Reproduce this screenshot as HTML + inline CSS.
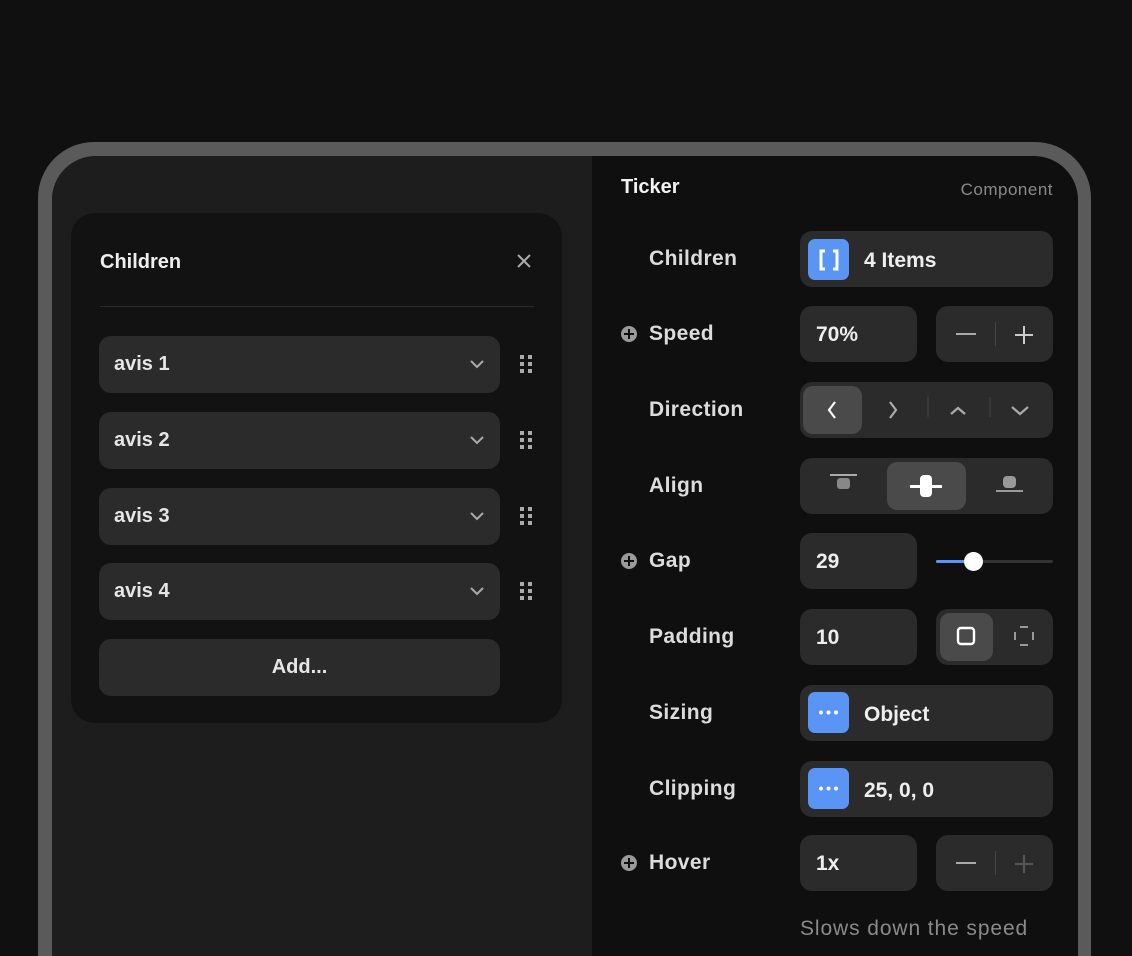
<!DOCTYPE html>
<html><head><meta charset="utf-8"><style>
*{margin:0;padding:0;box-sizing:border-box}
html,body{width:1132px;height:956px;overflow:hidden}
body{background:#101010;position:relative;font-family:"Liberation Sans",sans-serif;color:#e6e6e6}
.a{position:absolute}
.frame{left:38px;top:142px;width:1053px;height:814px;background:#5a5a5a;border-radius:56px 56px 0 0}
.inner{left:52px;top:156px;width:1026px;height:800px;background:#0f0f0f;border-radius:44px 44px 0 0;overflow:hidden}
.leftp{left:0;top:0;width:540px;height:800px;background:#1d1d1d}
.pop{left:71px;top:213px;width:491px;height:510px;background:#121212;border-radius:24px}
.row{left:99px;width:401px;height:57px;background:#2b2b2b;border-radius:12px;font-weight:bold;font-size:20px;line-height:57px;padding-left:15px}
.lbl{left:649px;font-size:21px;font-weight:bold;color:#dcdcdc;letter-spacing:0.4px;line-height:24px}
.box{background:#2b2b2b;border-radius:12px}
.val{font-size:21px;font-weight:bold;color:#eee}
.blue{width:41px;height:41px;background:#5a95f5;border-radius:7px}
.plus{left:621px;width:16px;height:16px;border-radius:50%;background:#9a9a9a}
.plus:before{content:"";position:absolute;left:3px;top:7px;width:10px;height:2px;background:#0f0f0f}
.plus:after{content:"";position:absolute;left:7px;top:3px;width:2px;height:10px;background:#0f0f0f}
</style></head><body>
<div class="a frame"></div>
<div class="a inner"><div class="a leftp"></div></div>

<div class="a pop"></div>
<div class="a" style="left:100px;top:251px;font-size:20px;font-weight:bold;color:#eee">Children</div>
<svg class="a" style="left:516px;top:253px" width="16" height="16"><path d="M2 2L14 14M14 2L2 14" stroke="#aaa" stroke-width="2"/></svg>
<div class="a" style="left:100px;top:306px;width:434px;height:1px;background:#2c2c2c"></div>

<div class="a row" style="top:336px">avis 1</div>
<div class="a row" style="top:412px">avis 2</div>
<div class="a row" style="top:488px">avis 3</div>
<div class="a row" style="top:563px">avis 4</div>
<div class="a row" style="top:639px;padding-left:0;text-align:center">Add...</div>
<svg class="a" style="left:468px;top:356px" width="20" height="260">
<g fill="none" stroke="#aaa" stroke-width="2"><path d="M3 5l6 6 6-6"/><path d="M3 81l6 6 6-6"/><path d="M3 157l6 6 6-6"/><path d="M3 232l6 6 6-6"/></g></svg>
<svg class="a" style="left:519px;top:354px" width="16" height="250" fill="#aaa">
<g><rect x="1" y="1" width="4" height="4"/><rect x="9" y="1" width="4" height="4"/><rect x="1" y="8" width="4" height="4"/><rect x="9" y="8" width="4" height="4"/><rect x="1" y="15" width="4" height="4"/><rect x="9" y="15" width="4" height="4"/></g>
<g transform="translate(0,76)"><rect x="1" y="1" width="4" height="4"/><rect x="9" y="1" width="4" height="4"/><rect x="1" y="8" width="4" height="4"/><rect x="9" y="8" width="4" height="4"/><rect x="1" y="15" width="4" height="4"/><rect x="9" y="15" width="4" height="4"/></g>
<g transform="translate(0,152)"><rect x="1" y="1" width="4" height="4"/><rect x="9" y="1" width="4" height="4"/><rect x="1" y="8" width="4" height="4"/><rect x="9" y="8" width="4" height="4"/><rect x="1" y="15" width="4" height="4"/><rect x="9" y="15" width="4" height="4"/></g>
<g transform="translate(0,227)"><rect x="1" y="1" width="4" height="4"/><rect x="9" y="1" width="4" height="4"/><rect x="1" y="8" width="4" height="4"/><rect x="9" y="8" width="4" height="4"/><rect x="1" y="15" width="4" height="4"/><rect x="9" y="15" width="4" height="4"/></g>
</svg>

<!-- right panel -->
<div class="a" style="left:621px;top:176px;font-size:20px;font-weight:bold;color:#f2f2f2">Ticker</div>
<div class="a" style="left:880px;width:173px;text-align:right;top:180px;font-size:17px;letter-spacing:0.5px;color:#8a8a8a">Component</div>

<div class="a lbl" style="top:247px">Children</div>
<div class="a box" style="left:800px;top:231px;width:253px;height:56px"></div>
<div class="a blue" style="left:808px;top:239px"></div>
<svg class="a" style="left:818px;top:249px" width="22" height="22"><path d="M7 2H3V20H7M15 2H19V20H15" fill="none" stroke="#fff" stroke-width="3"/></svg>
<div class="a val" style="left:864px;top:249px">4 Items</div>

<div class="a plus" style="top:326px"></div>
<div class="a lbl" style="top:322px">Speed</div>
<div class="a box" style="left:800px;top:306px;width:117px;height:56px"></div>
<div class="a val" style="left:816px;top:323px">70%</div>
<div class="a box" style="left:936px;top:306px;width:117px;height:56px"></div>
<div class="a" style="left:956px;top:333px;width:20px;height:2px;background:#aaa"></div>
<div class="a" style="left:995px;top:322px;width:1px;height:24px;background:#444"></div>
<div class="a" style="left:1015px;top:334px;width:18px;height:2px;background:#ccc"></div>
<div class="a" style="left:1023px;top:326px;width:2px;height:18px;background:#ccc"></div>

<div class="a lbl" style="top:398px">Direction</div>
<div class="a box" style="left:800px;top:382px;width:253px;height:56px"></div>
<div class="a" style="left:803px;top:386px;width:59px;height:48px;background:#4a4a4a;border-radius:10px"></div>
<svg class="a" style="left:800px;top:382px" width="253" height="56">
<g fill="none" stroke-width="2.2"><path d="M35 20l-6 8 6 8" stroke="#fff"/><path d="M90 20l6 8-6 8" stroke="#aaa"/><path d="M151 32l7-6 7 6" stroke="#aaa"/><path d="M212 25l8 7 8-7" stroke="#aaa"/></g>
<path d="M128 15v20M190 15v20" stroke="#444"/></svg>

<div class="a lbl" style="top:474px">Align</div>
<div class="a box" style="left:800px;top:458px;width:253px;height:56px"></div>
<div class="a" style="left:887px;top:462px;width:79px;height:48px;background:#4a4a4a;border-radius:10px"></div>
<svg class="a" style="left:800px;top:458px" width="253" height="56">
<rect x="30" y="16" width="27" height="2" fill="#aaa"/><rect x="37" y="20" width="13" height="11" rx="3" fill="#888"/>
<rect x="110" y="27" width="32" height="3" fill="#fff"/><rect x="120" y="17" width="12" height="22" rx="4" fill="#fff"/>
<rect x="203" y="18" width="13" height="12" rx="4" fill="#999"/><rect x="196" y="32" width="27" height="2" fill="#999"/>
</svg>

<div class="a plus" style="top:553px"></div>
<div class="a lbl" style="top:549px">Gap</div>
<div class="a box" style="left:800px;top:533px;width:117px;height:56px"></div>
<div class="a val" style="left:816px;top:550px">29</div>
<div class="a" style="left:936px;top:560px;width:117px;height:3px;background:#333;border-radius:2px"></div>
<div class="a" style="left:936px;top:560px;width:38px;height:3px;background:#5a95f5;border-radius:2px"></div>
<div class="a" style="left:964px;top:552px;width:19px;height:19px;background:#fff;border-radius:50%"></div>

<div class="a lbl" style="top:625px">Padding</div>
<div class="a box" style="left:800px;top:609px;width:117px;height:56px"></div>
<div class="a val" style="left:816px;top:626px">10</div>
<div class="a box" style="left:936px;top:609px;width:117px;height:56px"></div>
<div class="a" style="left:940px;top:613px;width:53px;height:48px;background:#4a4a4a;border-radius:10px"></div>
<svg class="a" style="left:936px;top:609px" width="117" height="56">
<rect x="22" y="19" width="16" height="16" rx="3" fill="none" stroke="#fff" stroke-width="2.4"/>
<g stroke="#999" stroke-width="2" fill="none"><path d="M79 23v8M97 23v8M84 18h8M84 36h8"/></g></svg>

<div class="a lbl" style="top:701px">Sizing</div>
<div class="a box" style="left:800px;top:685px;width:253px;height:56px"></div>
<div class="a blue" style="left:808px;top:692px"></div>
<svg class="a" style="left:808px;top:692px" width="41" height="41" fill="#fff"><circle cx="13" cy="20.5" r="2"/><circle cx="20.5" cy="20.5" r="2"/><circle cx="28" cy="20.5" r="2"/></svg>
<div class="a val" style="left:864px;top:703px">Object</div>

<div class="a lbl" style="top:777px">Clipping</div>
<div class="a box" style="left:800px;top:761px;width:253px;height:56px"></div>
<div class="a blue" style="left:808px;top:768px"></div>
<svg class="a" style="left:808px;top:768px" width="41" height="41" fill="#fff"><circle cx="13" cy="20.5" r="2"/><circle cx="20.5" cy="20.5" r="2"/><circle cx="28" cy="20.5" r="2"/></svg>
<div class="a val" style="left:864px;top:779px">25, 0, 0</div>

<div class="a plus" style="top:855px"></div>
<div class="a lbl" style="top:851px">Hover</div>
<div class="a box" style="left:800px;top:835px;width:117px;height:56px"></div>
<div class="a val" style="left:816px;top:852px">1x</div>
<div class="a box" style="left:936px;top:835px;width:117px;height:56px"></div>
<div class="a" style="left:956px;top:862px;width:20px;height:2px;background:#aaa"></div>
<div class="a" style="left:995px;top:851px;width:1px;height:24px;background:#444"></div>
<div class="a" style="left:1015px;top:863px;width:18px;height:2px;background:#555"></div>
<div class="a" style="left:1023px;top:855px;width:2px;height:18px;background:#555"></div>

<div class="a" style="left:800px;top:917px;font-size:21px;letter-spacing:0.9px;color:#8a8a8a">Slows down the speed</div>
</body></html>
